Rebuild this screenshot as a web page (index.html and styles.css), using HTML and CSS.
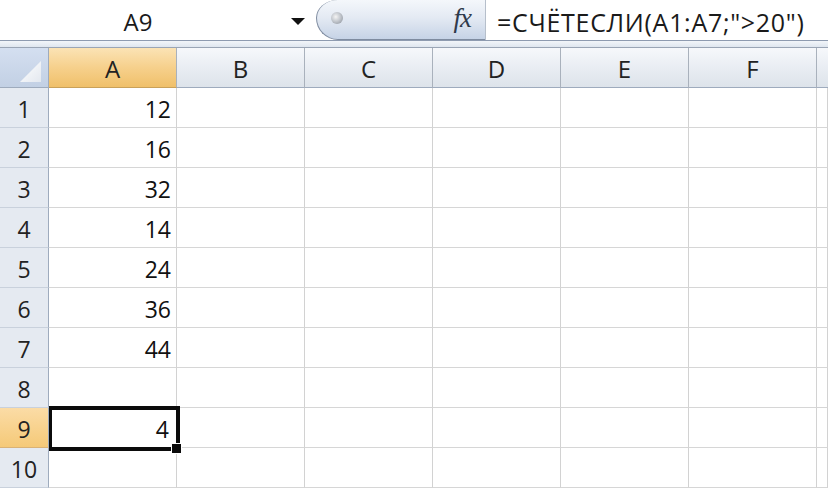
FILE: index.html
```html
<!DOCTYPE html>
<html>
<head>
<meta charset="utf-8">
<link rel="stylesheet" href="styles.css">
</head>
<body>
<div class="fbar">
  <div class="namebox">A9</div>
  <div class="ddarrow"></div>
  <div class="pill">
    <span class="knob"></span>
    <span class="fx">fx</span>
  </div>
  <div class="formula">=СЧЁТЕСЛИ(A1:A7;"&gt;20")</div>
</div>
<div class="band"></div>
<div class="sheet">
  <div class="corner"><span class="tri"></span></div>
  <div class="ch sel-h">A</div>
  <div class="ch">B</div>
  <div class="ch">C</div>
  <div class="ch">D</div>
  <div class="ch">E</div>
  <div class="ch">F</div>
  <div class="ch last"></div>

  <div class="rh">1</div><div class="c num">12</div><div class="c"></div><div class="c"></div><div class="c"></div><div class="c"></div><div class="c"></div><div class="c"></div>
  <div class="rh">2</div><div class="c num">16</div><div class="c"></div><div class="c"></div><div class="c"></div><div class="c"></div><div class="c"></div><div class="c"></div>
  <div class="rh">3</div><div class="c num">32</div><div class="c"></div><div class="c"></div><div class="c"></div><div class="c"></div><div class="c"></div><div class="c"></div>
  <div class="rh">4</div><div class="c num">14</div><div class="c"></div><div class="c"></div><div class="c"></div><div class="c"></div><div class="c"></div><div class="c"></div>
  <div class="rh">5</div><div class="c num">24</div><div class="c"></div><div class="c"></div><div class="c"></div><div class="c"></div><div class="c"></div><div class="c"></div>
  <div class="rh">6</div><div class="c num">36</div><div class="c"></div><div class="c"></div><div class="c"></div><div class="c"></div><div class="c"></div><div class="c"></div>
  <div class="rh">7</div><div class="c num">44</div><div class="c"></div><div class="c"></div><div class="c"></div><div class="c"></div><div class="c"></div><div class="c"></div>
  <div class="rh">8</div><div class="c"></div><div class="c"></div><div class="c"></div><div class="c"></div><div class="c"></div><div class="c"></div><div class="c"></div>
  <div class="rh sel-h">9</div><div class="c num active">4<span class="selbox"></span><span class="handle"></span></div><div class="c"></div><div class="c"></div><div class="c"></div><div class="c"></div><div class="c"></div><div class="c"></div>
  <div class="rh">10</div><div class="c"></div><div class="c"></div><div class="c"></div><div class="c"></div><div class="c"></div><div class="c"></div><div class="c"></div>
</div>
</body>
</html>
```
FILE: styles.css
```css
* { box-sizing: border-box; }
html, body {
  margin: 0;
  padding: 0;
  width: 828px;
  height: 490px;
  overflow: hidden;
  background: #ffffff;
  font-family: "Open Sans", "Noto Sans", sans-serif;
  color: #1a1a1a;
}
.fbar {
  display: flex;
  height: 41px;
  border-bottom: 1px solid #8e9bb0;
  background: #ffffff;
}
.namebox {
  width: 284px;
  font-size: 24px;
  line-height: 44px;
  text-align: center;
  padding-right: 8px;
}
.ddarrow {
  width: 32px;
  display: flex;
  align-items: center;
  justify-content: center;
}
.ddarrow::before {
  content: "";
  width: 0;
  height: 0;
  border-left: 7px solid transparent;
  border-right: 7px solid transparent;
  border-top: 7px solid #111;
  margin-left: -5px;
  margin-top: 2px;
}
.pill {
  position: relative;
  width: 170px;
  height: 40px;
  border: 1px solid #7f8ca0;
  border-right: 1px solid #b6bfcb;
  border-top: none;
  border-top-left-radius: 22px 18px;
  border-bottom-left-radius: 22px 22px;
  background: linear-gradient(to bottom, #f4f7fb 0%, #e4eaf3 45%, #c6d3e6 100%);
  display: flex;
  align-items: center;
  justify-content: flex-end;
  padding-right: 12px;
}
.knob {
  position: absolute;
  left: 14px;
  top: 12px;
  width: 12px;
  height: 12px;
  border-radius: 50%;
  background: radial-gradient(circle at 40% 40%, #f4f4f4 0%, #c4c8ce 45%, #838a94 100%);
}
.fx {
  font-family: "Liberation Serif", "DejaVu Serif", serif;
  font-style: italic;
  font-size: 27px;
  color: #2f3a4b;
  letter-spacing: -1px;
  margin-top: -3px;
  padding-right: 2px;
}
.formula {
  flex: 1;
  font-size: 25px;
  line-height: 44px;
  padding-left: 11px;
  white-space: nowrap;
  letter-spacing: 0.7px;
}
.band {
  height: 7px;
  background: linear-gradient(to bottom, #f2f5f9, #dfe6ef);
  border-bottom: 1px solid #9aa5b5;
}
.sheet {
  display: grid;
  grid-template-columns: 49px repeat(6, 128px) 1fr;
  grid-template-rows: repeat(11, 40px);
}
.corner {
  position: relative;
  background: linear-gradient(to bottom, #d4dff0, #c2d0e4);
  border-right: 1px solid #9eabbd;
  border-bottom: 1px solid #9eabbd;
}
.tri {
  position: absolute;
  left: 20px;
  top: 13px;
  width: 21px;
  height: 21px;
  background: linear-gradient(135deg, #ffffff, #e3e8ef);
  clip-path: polygon(100% 0, 100% 100%, 0 100%);
}
.ch {
  background: linear-gradient(to bottom, #f6f8fb 0%, #e9edf3 50%, #dde3ea 100%);
  border-right: 1px solid #a9b1bc;
  border-bottom: 1px solid #9eabbd;
  font-size: 24px;
  line-height: 42px;
  text-align: center;
  color: #222;
}
.ch.last { border-right: none; }
.ch.sel-h {
  background: linear-gradient(to bottom, #fbe3b5 0%, #f6d08c 50%, #f0c06a 100%);
  border-bottom-color: #c9a15a;
}
.rh {
  background: #e5eaf1;
  border-right: 1px solid #9eabbd;
  border-bottom: 1px solid #c9d1dc;
  font-size: 23px;
  line-height: 43px;
  text-align: center;
  color: #222;
}
.rh.sel-h {
  background: linear-gradient(to bottom, #fbdca6, #f5c978);
  border-bottom-color: #d9b276;
}
.c {
  border-right: 1px solid #d2d2d2;
  border-bottom: 1px solid #d6d6d6;
  font-size: 23px;
  line-height: 43px;
  color: #111;
}
.c.num {
  text-align: right;
  padding-right: 5px;
}
.c.active {
  position: relative;
  padding-right: 7px;
}
.selbox {
  position: absolute;
  left: 0;
  top: -2px;
  width: 131px;
  height: 45px;
  border: 4px solid #0b0b0b;
  border-left-width: 3px;
  pointer-events: none;
}
.handle {
  position: absolute;
  left: 123px;
  top: 36px;
  width: 9px;
  height: 9px;
  background: #0b0b0b;
  box-shadow: 0 0 0 1px #ffffff;
}
```
